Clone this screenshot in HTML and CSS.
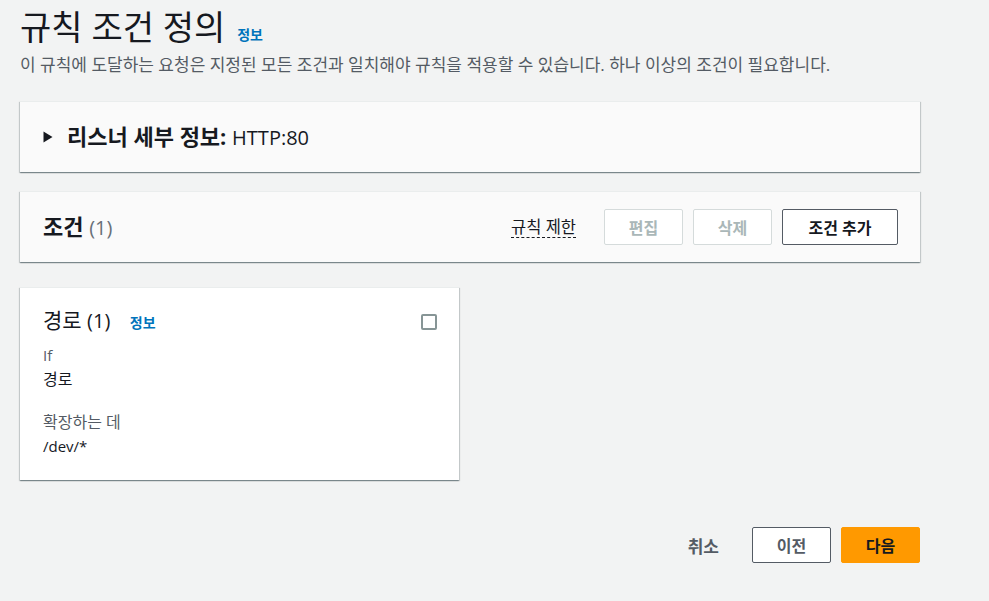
FILE: index.html
```html
<!DOCTYPE html>
<html lang="ko">
<head>
<meta charset="utf-8">
<link rel="stylesheet" href="styles.css">
</head>
<body>
<div class="page">
  <header class="head">
    <h1 class="title">규칙 조건 정의 <a class="info title-info" href="#">정보</a></h1>
    <p class="desc">이 규칙에 도달하는 요청은 지정된 모든 조건과 일치해야 규칙을 적용할 수 있습니다. 하나 이상의 조건이 필요합니다.</p>
  </header>

  <section class="panel first">
    <div class="panel-head">
      <svg class="caret" width="10" height="12" viewBox="0 0 10 12"><path d="M0.5 0.5 L9.5 6 L0.5 11.5 Z" fill="#16191f"/></svg>
      <span class="panel-title"><b>리스너 세부 정보:</b> <span class="latin">HTTP:80</span></span>
    </div>
  </section>

  <section class="panel">
    <div class="panel-head split">
      <span class="panel-title"><b>조건</b> <span class="latin count">(1)</span></span>
      <div class="actions">
        <span class="limit">규칙 제한</span>
        <button class="btn disabled">편집</button>
        <button class="btn disabled">삭제</button>
        <button class="btn normal add">조건 추가</button>
      </div>
    </div>
  </section>

  <div class="card">
    <div class="card-head">
      <span class="card-title">경로 <span class="latin">(1)</span> <a class="info card-info" href="#">정보</a></span>
      <span class="checkbox"></span>
    </div>
    <div class="field">
      <div class="label latin-s">If</div>
      <div class="value">경로</div>
    </div>
    <div class="field second">
      <div class="label">확장하는 데</div>
      <div class="value latin-s">/dev/*</div>
    </div>
  </div>

  <footer class="footer">
    <span class="cancel">취소</span>
    <button class="btn normal fbtn">이전</button>
    <button class="btn primary fbtn">다음</button>
  </footer>
</div>
</body>
</html>
```

FILE: styles.css
```css
* { box-sizing: border-box; }
html, body { margin: 0; padding: 0; }
body {
  background: #f2f3f3;
  font-family: "Open Sans", "Noto Sans CJK KR", sans-serif;
  color: #16191f;
  width: 989px;
  height: 601px;
  overflow: hidden;
}
.page {
  width: 900px;
  margin-left: 20px;
  display: flex;
  flex-direction: column;
}
.head { padding-top: 7px; }
.title {
  margin: 0;
  height: 40px;
  font-size: 34px;
  line-height: 40px;
  font-weight: 400;
  color: #16191f;
  white-space: nowrap;
}
.info {
  font-size: 14px;
  font-weight: 700;
  color: #0073bb;
  text-decoration: none;
}
.title-info { margin-left: 3px; line-height: 1; vertical-align: baseline; }
.desc {
  margin: 7px 0 0 0;
  height: 22px;
  font-size: 17px;
  line-height: 22px;
  color: #545b64;
  white-space: nowrap;
}
.panel {
  margin-top: 19px;
  height: 71px;
  background: #fafafa;
  box-shadow: 0 1px 1px 0 rgba(0,28,36,.3), 1px 1px 1px 0 rgba(0,28,36,.15), -1px 1px 1px 0 rgba(0,28,36,.15);
  border-top: 1px solid #eaeded;
}
.panel.first { margin-top: 25px; }
.panel-head {
  height: 70px;
  display: flex;
  align-items: center;
  padding: 0 23px;
}
.caret { margin-right: 14px; }
.panel-title {
  font-size: 22px;
  line-height: 28px;
  color: #16191f;
}
.panel-title b { font-weight: 700; }
.latin { font-size: 20px; }
.count { color: #687078; }
.split { justify-content: space-between; padding-right: 22px; }
.actions { display: flex; align-items: center; }
.limit {
  font-size: 16.5px;
  color: #16191f;
  border-bottom: 1px dashed #16191f;
  line-height: 20px;
  margin-right: 28px;
}
.btn {
  font-family: inherit;
  font-size: 16px;
  font-weight: 700;
  height: 36px;
  border-radius: 2px;
  padding: 0;
  cursor: pointer;
  background: #fff;
}
.btn + .btn { margin-left: 10px; }
.disabled {
  width: 79px;
  border: 1px solid #d5dbdb;
  color: #aab7b8;
}
.normal {
  border: 1px solid #545b64;
  color: #545b64;
}
.add { width: 116px; color: #16191f; }
.card {
  margin-top: 25px;
  width: 439px;
  height: 193px;
  background: #fff;
  box-shadow: 0 1px 1px 0 rgba(0,28,36,.3), 1px 1px 1px 0 rgba(0,28,36,.15), -1px 1px 1px 0 rgba(0,28,36,.15);
  border-top: 1px solid #eaeded;
  padding: 18px 22px 0 23px;
}
.card-head {
  display: flex;
  justify-content: space-between;
  align-items: center;
}
.card-title { font-size: 21px; line-height: 28px; color: #16191f; }
.card-info { margin-left: 14px; }
.checkbox {
  width: 16px;
  height: 16px;
  border: 2px solid #879596;
  border-radius: 2px;
}
.field { margin-top: 6px; }
.field.second { margin-top: 19px; }
.label { font-size: 16px; line-height: 24px; color: #545b64; }
.value { font-size: 16px; line-height: 24px; color: #16191f; }
.label.latin-s, .value.latin-s { font-size: 15px; }
.footer {
  margin-top: 47px;
  display: flex;
  justify-content: flex-end;
  align-items: center;
}
.cancel {
  font-size: 17px;
  font-weight: 700;
  color: #545b64;
  margin-right: 33px;
}
.fbtn { width: 79px; height: 36px; }
.primary {
  background: #ff9900;
  border: 1px solid #ff9900;
  color: #16191f;
}
```
